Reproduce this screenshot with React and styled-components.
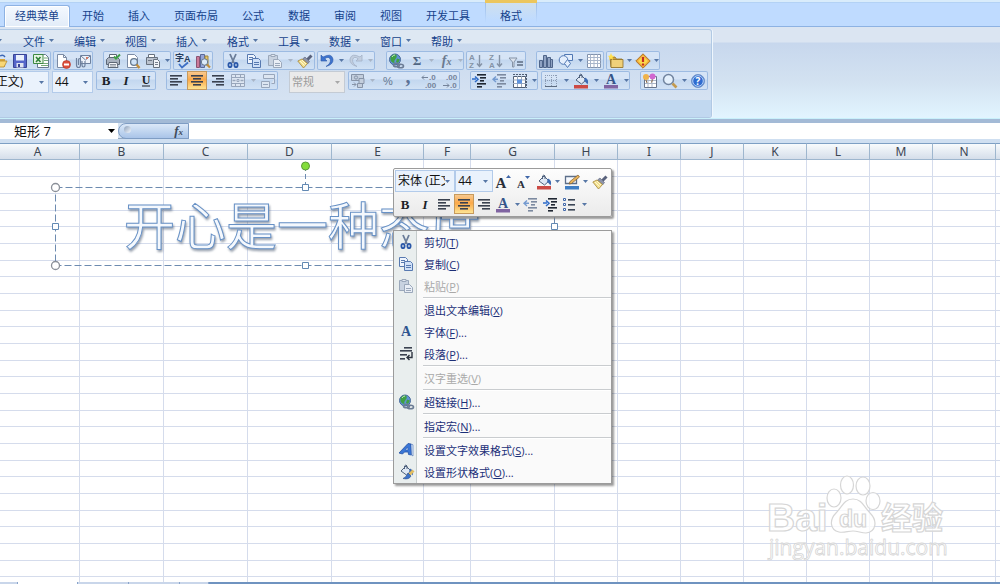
import React, {useState} from 'react'
import styled, {createGlobalStyle, css} from "styled-components";

const GlobalStyle = createGlobalStyle`
  * { box-sizing: border-box; }
  body {
    margin: 0;
    overflow: hidden;
    background: #fff;
  }
  body, button, input, select {
    font-family: "Open Sans", "Noto Sans CJK SC", sans-serif;
    font-size: 11px;
  }
  button {
    margin: 0;
    padding: 0;
    border: 0;
    background: none;
    color: inherit;
  }
  svg { display: block; flex: none; overflow: visible; }
`

/* ---------- icons ---------- */

const NAVY = "#33475f";
const GRAY = "#8593a6";

const lines = (rows, color) => rows.map(([x, y, w]) => <rect key={`${x}-${y}`} x={x} y={y} width={w} height="1.6" fill={color}/>);

const scissors = (
	<g fill="none" strokeWidth="1.8">
		<path d="M5 1l4 9M11 1L7 10" stroke="#6b7d99"/>
		<ellipse cx="5" cy="12" rx="1.6" ry="2.2" stroke="#2957a8"/>
		<ellipse cx="11" cy="12" rx="1.6" ry="2.2" stroke="#2957a8"/>
	</g>
);
const pages = (a, b) => (
	<g fill={b} stroke={a}>
		<path d="M1.5 1.5h6l2 2v7h-8z"/>
		<path d="M3 4.5h4M3 6.5h4"/>
		<path d="M6.5 5.5h6l2 2v7h-8z" fill="#cfe0f8"/>
		<path d="M8 9.5h5M8 11.5h5" />
	</g>
);
const clipboard = (
	<g stroke="#9ba8bb" fill="#c8d2e0">
		<path d="M1.5 2.5h9v10h-9z"/>
		<path d="M4 1.5h4v2H4z" fill="#e3e9f2"/>
		<path d="M6.5 6.5h5l3 3v5h-8z" fill="#e9eef6"/>
		<path d="M8 10.5h5M8 12.5h5"/>
	</g>
);
const brush = (
	<g>
		<path d="M14.5 2.5l-4 4" stroke="#59627c" strokeWidth="3"/>
		<path d="M8 4l4.500 4.500-2 2.500-5-5z" fill="#8d93a8" stroke="#596178" strokeWidth=".6"/>
		<path d="M5 6l5.500 4.500-4 4.500L.8 8z" fill="#f3e08f" stroke="#a58536" strokeWidth=".8"/>
		<path d="M3 8l4.500 4.600M5 7l4 4" stroke="#fff8d0"/>
	</g>
);
const globe = (
	<g>
		<circle cx="7" cy="6.5" r="5.5" fill="#5f93d4" stroke="#47699a"/>
		<path d="M2.500 4q3-4 6-2 1 2-1 4t-1 4q-3 0-4-3zM9 5.500l3 1-2 3.500-2-1z" fill="#3fa044"/>
		<path d="M4 4q1-2 3-2" stroke="#bfe6bd" fill="none"/>
		<g fill="none" stroke="#6b7c95" strokeWidth="1.600">
			<ellipse cx="8.500" cy="12" rx="3" ry="1.800"/>
			<ellipse cx="12.500" cy="13" rx="3" ry="1.800"/>
		</g>
	</g>
);
const bucket = (
	<g>
		<path d="M3 7l5-5 5 5-4.500 4z" fill="#dfe8f4" stroke="#50627e"/>
		<path d="M6.500 5V2q1.500-2 2.500 0v3" fill="none" stroke="#50627e"/>
		<path d="M12 4.500q4.500 2 2.500 7-1.500-2-3.500-4z" fill="#3d6bb3"/>
	</g>
);
const letter = (t, color = NAVY, size = 14, props = {}) => (
	<text x="8" y="13" textAnchor="middle" fontFamily="Liberation Serif, serif" fontSize={size} fill={color} {...props}>{t}</text>
);
const small = (t, x, y, color = GRAY, size = 8) => (
	<text x={x} y={y} fontFamily="Liberation Sans, sans-serif" fontWeight="bold" fontSize={size} fill={color}>{t}</text>
);

const ICONS = {
	open: <g><path d="M1 4h5l1 2h7v8H1z" fill="#d9a63b"/><path d="M4 8h12l-3 6H1z" fill="#f8d777" stroke="#b68a2c" strokeWidth=".8"/><path d="M9 3q3-2 5 1" fill="none" stroke="#3c67b5" strokeWidth="1.4"/></g>,
	save: <g><path d="M1.500 1.500h13v13h-13z" fill="#5566c9" stroke="#384495"/><path d="M4 2h8v5.500H4z" fill="#eaf0fc"/><path d="M4.500 10h7v4.500h-7z" fill="#dfe4f0"/><path d="M6 11h2v3H6z" fill="#384495"/></g>,
	excel: <g><path d="M4.500 1.500h8l3 3v10h-11z" fill="#fff" stroke="#66798f"/><path d="M11 5h4M11 7.500h4M8 10.500h7M8 12.500h7" stroke="#75a878"/><path d="M.5 1.500h9.500v9H.5z" fill="#e7f4e4" stroke="#3e8a42"/><path d="M3 4l4.500 5M7.500 4L3 9" stroke="#2e8237" strokeWidth="1.600"/></g>,
	deny: <g><path d="M2.500 1.500h6l3 3v10h-9z" fill="#fff" stroke="#7b8ba5"/><path d="M8.500 1.500v3h3" fill="none" stroke="#7b8ba5"/><circle cx="11.500" cy="11.500" r="4" fill="#dc4f3c" stroke="#b43324" strokeWidth=".6"/><path d="M9 11.500h5" stroke="#fff" strokeWidth="1.800"/></g>,
	mail: <g fill="#edf2fa" stroke="#6e819e"><path d="M5.500 2.500h10v8h-10z"/><path d="M6 3l4.500 4L15 3" fill="none"/><rect x="11" y="4" width="2" height="2" fill="#d57b65" stroke="none"/><path d="M1.500 5v7q0 2.500 2 2.500t2-2.500V7q0-1.500-1-1.500T3.500 7v5M7 8v4q0 2 1.500 2t1.500-2V8" fill="none" strokeWidth="1.200"/></g>,
	print: <g stroke="#5d6775"><path d="M4.500 1.500h7v5h-7z" fill="#fff"/><path d="M1.500 6.500l2-2h9l2 2v5h-13z" fill="#a9b2bf"/><path d="M4 9.500h8l1 5H3z" fill="#f4f6f9"/><path d="M5 11.500h6M5 13h6" strokeWidth=".7"/><path d="M9 3.500l2 2 4-4" fill="none" stroke="#3fa047" strokeWidth="2"/></g>,
	preview: <g><path d="M2.500 1.500h7l3 3v10h-10z" fill="#fff" stroke="#7b8ba5"/><circle cx="9" cy="9" r="3.400" fill="#cfe3f8" stroke="#66798f" strokeWidth="1.300"/><path d="M11.500 11.500l3 3.500" stroke="#c18e3d" strokeWidth="2.400"/></g>,
	printArea: <g stroke="#67717f"><path d="M3.500 1.500h6v3h-6z" fill="#fff"/><path d="M1.500 4.500h11v7h-11z" fill="#bac2ce"/><path d="M8.500 6.500h4l2 2v6h-6z" fill="#f1f4f9"/><path d="M10 9.500h3M10 11.500h3M3 7.500h4" strokeWidth=".9"/></g>,
	spell: <g><text x="0" y="8" fontSize="9" fontWeight="bold" fill="#263c5c">字</text>{small("A", 9, 9, "#263c5c", 9)}<path d="M4 11l3 3.500 6-5" fill="none" stroke="#3d6fc4" strokeWidth="1.800"/></g>,
	research: <g><path d="M1.500 3.500h3v11h-3z" fill="#cb7a9a" stroke="#8b5473"/><path d="M5.500 1.500h4v13h-4z" fill="#95a4d8" stroke="#5a6a99"/><path d="M10 3l3 0v9h-3z" fill="#e8c667" stroke="#9b8340"/><circle cx="9.500" cy="9" r="3.200" fill="#dbeafa" stroke="#66798f"/><path d="M12 11.500l3 3" stroke="#c18e3d" strokeWidth="2.200"/></g>,
	cut: scissors,
	copy: pages("#5779b0", "#eef4fd"),
	paste: clipboard,
	brush,
	undo: <path d="M2 2v6h6L5.800 5.800q4-3 5.500.5 1 4-4.300 7.200 7.500-2 7-7.500Q12.500-.5 4 4z" fill="#3e74cf" stroke="#2c57a6" strokeWidth=".6"/>,
	redo: <path d="M14 2v6H8l2.200-2.200q-4-3-5.500.5-1 4 4.300 7.200Q1.500 11.500 2 6 3.500-.5 12 4z" fill="#c3cfe0" stroke="#a3b1c6" strokeWidth=".8"/>,
	link: globe,
	sum: letter("Σ", "#4f6683", 13, {y: 12, fontWeight: "bold"}),
	fx: <g>{letter("f", "#6a7a8f", 14, {x: 6, y: 12, fontStyle: "italic", fontWeight: "bold"})}{letter("x", "#6a7a8f", 10, {x: 11, y: 12, fontStyle: "italic", fontWeight: "bold"})}</g>,
	az: <g>{small("A", 1, 7)}{small("Z", 1, 15)}<path d="M11.500 2v11M9 10.500l2.500 3 2.500-3" fill="none" stroke={GRAY} strokeWidth="1.400"/></g>,
	za: <g>{small("Z", 1, 7)}{small("A", 1, 15)}<path d="M11.500 2v11M9 10.500l2.500 3 2.500-3" fill="none" stroke={GRAY} strokeWidth="1.400"/></g>,
	filter: <g><path d="M1 5h8L6 9v5H4.500V9z" fill="#dbe3ee" stroke={GRAY}/><path d="M9 9h6M9 12h6" stroke="#5d6c81" strokeWidth="1.500"/></g>,
	chart: <g fill="#8fa2c2" stroke="#4f658a"><path d="M1.500 7.500h3v7h-3zM5.500 2.500h3v12h-3zM9.500 4.500h3v10h-3z"/><path d="M12.500 6.500h2v8h-2z"/></g>,
	shapes: <g fill="#e4eefc" stroke="#5178b4"><path d="M6.500 1.500h8v6h-8z"/><circle cx="5.500" cy="7" r="4.300"/><path d="M9.500 6.500l3 4-3 4-3-4z"/></g>,
	table: <g><path d="M1.500 1.500h13v13h-13z" fill="#fff" stroke="#8192ad"/><path d="M1.500 4.500h13M1.500 7.500h13M1.500 10.500h13M4.500 1.500v13M8 1.500v13M11.500 1.500v13" stroke="#a9b6cb" fill="none"/></g>,
	folder: <g><path d="M2 4h5l1.500 2H14v8H3z" fill="#d5a63a" stroke="#8f7026" strokeWidth=".8"/><path d="M3 6.500h12v8H3z" fill="#efd07a" stroke="#8f7026" strokeWidth=".8"/><path d="M3 0l1 2.500 2.500.5-2 1.500L5 7 3 5.500 1 7l.5-2.500L0 3l2-.5z" fill="#ffe04e"/></g>,
	warn: <g><path d="M8 .8L15.200 8 8 15.200.8 8z" fill="#f0a83a" stroke="#b07726"/><path d="M8 3l5 5-5 5-5-5z" fill="#fbd94c"/><path d="M8 4v5M8 10.500v2" stroke="#c42d24" strokeWidth="2.200"/></g>,
	bold: letter("B", "#1b1f27", 13, {y: 12, fontWeight: "bold"}),
	italic: letter("I", "#1b1f27", 13, {y: 12, fontStyle: "italic", fontWeight: "bold"}),
	underline: <g>{letter("U", "#1b1f27", 12, {y: 11, fontWeight: "bold"})}<path d="M4 13h8" stroke="#1b1f27" strokeWidth="1.200"/></g>,
	left: lines([[2, 2, 12], [2, 5, 8], [2, 8, 12], [2, 11, 8]], "#3a4250"),
	center: lines([[2, 2, 12], [4, 5, 8], [2, 8, 12], [4, 11, 8]], "#3a4250"),
	right: lines([[2, 2, 12], [6, 5, 8], [2, 8, 12], [6, 11, 8]], "#3a4250"),
	merge: <g fill="#dde6f2" stroke="#98a6bb"><path d="M1.500 1.500h13v12h-13z"/><path d="M1.500 4.500h13M1.500 10.500h13M5.500 1.500v3M10.500 1.500v3M5.500 10.500v3M10.500 10.500v3"/><path d="M2.500 7.500h3M10.500 7.500h3" strokeWidth="1.400"/><path d="M7 6.500h2v2H7z"/></g>,
	wrap: <g fill="#dde6f2" stroke="#98a6bb"><path d="M3.500 1.500h11v4h-11zM1.500 8.500h8v6h-8z"/><path d="M14.500 5.500v5h-3M3 11.500h5"/></g>,
	currency: <g fill="#c3cedd" stroke="#8794a8"><path d="M1.500 1.500h12v6h-12z"/><circle cx="6" cy="4.500" r="1.600"/><path d="M9 5.500h5v5H9zM7.500 10.500h5v4h-5z"/><path d="M2 11.500h4M4 9.500l2 2-2 2" fill="none"/></g>,
	percent: <text x="8" y="12" textAnchor="middle" fontFamily="Liberation Sans, sans-serif" fontSize="11" fill="#65768e">%</text>,
	comma: letter(",", "#5b7297", 20, {y: 10, fontWeight: "bold"}),
	decInc: <g>{small(".0", 8, 7, "#74839a", 8)}{small(".00", 4, 15, "#74839a", 8)}<path d="M7 4.500H1M3 2.500l-2 2 2 2" fill="none" stroke="#74839a"/></g>,
	decDec: <g>{small(".00", 4, 7, "#74839a", 8)}{small(".0", 8, 15, "#74839a", 8)}<path d="M1 12.500h6M5 10.500l2 2-2 2" fill="none" stroke="#74839a"/></g>,
	indent: <g>{lines([[5, 1, 9], [8, 4, 6], [8, 7, 4], [5, 10, 9], [5, 13, 5]], "#1f2632")}<path d="M0 6h4M3 3.500L6 6.300 3 9" fill="none" stroke="#2d6bc9" strokeWidth="1.500"/></g>,
	outdent: <g>{lines([[5, 1, 9], [8, 4, 6], [8, 7, 4], [5, 10, 9], [5, 13, 5]], "#7c8aa0")}<path d="M1 6.300h5M4 3.500L1 6.300 4 9" fill="none" stroke="#759bd0" strokeWidth="1.400"/></g>,
	range: <g><path d="M1.500 3.500h12v11h-12z" fill="#fff" stroke="#4f5d73"/><path d="M1 1.500h14" stroke="#4f5d73" strokeDasharray="2 1"/><path d="M5.500 3v11M9.500 3v11M1 7h13M1 10.500h13" stroke="#9aa7ba"/><path d="M5 6.500h5v4H5z" fill="#5f93dd"/><path d="M14.500 2v13" stroke="#4f5d73" strokeDasharray="2 1"/></g>,
	border: <g fill="none" stroke="#8b9bb3"><path d="M2.500 2v11M8.500 2v11M13.500 2v11M2 2.500h12M2 7.500h12" strokeDasharray="1 1"/><path d="M2 13.500h12" stroke="#5c6b80"/></g>,
	fill: <g>{bucket}<rect x="1" y="12" width="14" height="3.500" fill="#cc4a45"/></g>,
	fontColor: <g>{letter("A", "#36558a", 14, {y: 11, fontWeight: "bold"})}<rect x="1" y="12" width="14" height="3.500" fill="#8064a2"/></g>,
	calendar: <g><path d="M2.500 3.500h12v11h-12z" fill="#fff" stroke="#68758c"/><path d="M3 7.500h11M3 10.500h11M6 5v9M10 5v9" stroke="#aab5c7"/><circle cx="4" cy="4" r="3" fill="#efb34b"/><circle cx="10.500" cy="3.500" r="3" fill="#d167cf"/><path d="M4 7l1 3M10.500 6.500l-1 3" stroke="#8b6a44"/></g>,
	search: <g><circle cx="6.500" cy="6.500" r="5" fill="#e4f0fc" stroke="#71849f" strokeWidth="1.500"/><path d="M10.500 10.500l4 4" stroke="#c39a4e" strokeWidth="2.600"/></g>,
	help: <g><circle cx="8" cy="8" r="6.500" fill="#2f6cd0" stroke="#7395c8"/><circle cx="8" cy="8" r="5.300" fill="none" stroke="#bfd7f7"/><text x="8" y="12" textAnchor="middle" fontSize="10" fontWeight="bold" fill="#fff">?</text></g>,
	grow: <g>{letter("A", "#2a2f3a", 15, {x: 6, y: 14, fontWeight: "bold"})}<path d="M11 4l2.500-3L16 4z" fill="#3f66a8"/></g>,
	shrink: <g>{letter("A", "#2a2f3a", 11, {x: 6, y: 14, fontWeight: "bold"})}<path d="M10 2l2.500 3L15 2z" fill="#3f66a8"/></g>,
	outline: <g><path d="M1.500 2.500h11v7h-11z" fill="#f7fafe" stroke="#5d6f8a" strokeWidth="1.300"/><path d="M14 1L6 7.500l-1 2.500 2.500-.5L15.500 3z" fill="#e9b45c" stroke="#7c5a2a" strokeWidth=".7"/><rect x="1" y="12" width="14" height="3.500" fill="#3f7ec4"/></g>,
	list: <g>{lines([[6, 2, 7], [6, 7, 7], [6, 12, 7]], "#3b4656")}<path d="M1.500 1.500h2v2h-2zM1.500 6.500h2v2h-2zM1.500 11.500h2v2h-2z" fill="#fff" stroke="#3f66a8"/></g>,
	font: letter("A", "#2f5590", 14, {y: 12, fontWeight: "bold"}),
	paragraph: <g>{lines([[6, 1, 8], [2, 4, 12], [2, 8, 7], [2, 12, 5]], "#3a4250")}<path d="M14 6v5.500H9M11.500 9L9 11.500l2.500 2.500" fill="none" stroke="#2c333f" strokeWidth="1.400"/></g>,
	textEffect: <g><path d="M10 1.500l3 .5.500 11-3-.5-.3-2.500H6.500L4.500 12 1 11z" fill="#3a76d6" stroke="#2350a4" strokeWidth=".8"/><path d="M13 2l2 .8V14l-1.500-1zM9.500 5l.5 3H7.500z" fill="#e2edfc" stroke="#2350a4" strokeWidth=".5"/></g>,
	shapeFormat: <g>{bucket}<path d="M15.500 6.500L11 11" stroke="#e2bd60" strokeWidth="2.800"/><path d="M10 9l3 3q-2 4-8 2.500 3-1 5-5.500z" fill="#3d72c9" stroke="#2a4d8c" strokeWidth=".6"/></g>,
};

const Icon = ({name}) => <svg width="16" height="16" viewBox="0 0 16 16" aria-hidden="true">{ICONS[name]}</svg>;

const Caret = ({color = "#5777a6"}) => (
	<svg width="5" height="3" viewBox="0 0 5 3" aria-hidden="true"><path d="M0 0h5L2.500 3z" fill={color}/></svg>
);

/* ---------- data ---------- */

const TABS = ["经典菜单", "开始", "插入", "页面布局", "公式", "数据", "审阅", "视图", "开发工具"];
const MENUS = ["文件", "编辑", "视图", "插入", "格式", "工具", "数据", "窗口", "帮助"];

// "v" is a drop-down arrow beside the icon before it
const ROW_ONE = [
	{w: 62, gap: -11, items: ["open", "save", "excel"]},
	{w: 40, gap: 2, items: ["deny", "mail"]},
	{w: 68, gap: 10, items: ["print", "preview", "printArea", "v"]},
	{w: 40, gap: 2, items: ["spell", "research"]},
	{w: 92, gap: 10, items: ["cut", "copy", "paste", "v-", "brush"]},
	{w: 58, gap: 2, items: ["undo", "v", "redo", "v-"]},
	{w: 78, gap: 11, items: ["link", "sum", "v-", "fx", "v-"]},
	{w: 60, gap: 2, items: ["az", "za", "filter"]},
	{w: 68, gap: 10, items: ["chart", "shapes", "v", "table"]},
	{w: 54, gap: 2, items: ["folder", "v", "warn", "v"]},
];

const COLUMNS = [["A", 80], ["B", 84], ["C", 84], ["D", 84], ["E", 92], ["F", 47], ["G", 84], ["H", 63], ["I", 63], ["J", 63], ["K", 63], ["L", 63], ["M", 63], ["N", 63], ["", null]];
const ROWS = Array.from({length: 26}, (_, i) => i);

const CONTEXT = [
	{icon: "cut", text: "剪切", hot: "T"},
	{icon: "copy", text: "复制", hot: "C"},
	{icon: "paste", text: "粘贴", hot: "P", off: true},
	{line: true},
	{text: "退出文本编辑", hot: "X"},
	{icon: "font", text: "字体", hot: "F", more: true},
	{icon: "paragraph", text: "段落", hot: "P", more: true},
	{line: true},
	{text: "汉字重选", hot: "V", off: true},
	{line: true},
	{icon: "link", text: "超链接", hot: "H", more: true},
	{line: true},
	{text: "指定宏", hot: "N", more: true},
	{line: true},
	{icon: "textEffect", text: "设置文字效果格式", hot: "S", more: true},
	{icon: "shapeFormat", text: "设置形状格式", hot: "O", more: true},
];

/* ---------- parts ---------- */

const Tools = ({items}) => items.map((name, i) => (
	name[0] === "v"
		? <ArrowButton key={i} aria-label="更多"><Caret color={name === "v-" ? "#a9b5c6" : undefined}/></ArrowButton>
		: <ToolButton key={i} aria-label={name} $on={name === "center"}><Icon name={name}/></ToolButton>
));

const DropDown = ({label, value, w, gap, off}) => (
	<DropDownBox $w={w} $gap={gap} $off={off}>
		<select aria-label={label} defaultValue={value} disabled={off}>
			<option>{value}</option>
		</select>
		<Caret color={off ? "#a8a8a8" : undefined}/>
	</DropDownBox>
);

const Ribbon = () => (
	<RibbonArea>
		<RibbonGroup>
			<MenuBar>
				<MenuButton $cut aria-label="菜单"><Caret/></MenuButton>
				{MENUS.map((m) => <MenuButton key={m}>{m}<Caret/></MenuButton>)}
			</MenuBar>
			<ToolRow>
				{ROW_ONE.map((g, i) => <ToolGroup key={i} $w={g.w} $gap={g.gap}><Tools items={g.items}/></ToolGroup>)}
			</ToolRow>
			<ToolRow>
				<DropDown label="字体" value="宋体 (正文)" w={87} gap={-38}/>
				<DropDown label="字号" value="44" w={41} gap={3}/>
				<ToolGroup $w={60} $gap={3}><Tools items={["bold", "italic", "underline"]}/></ToolGroup>
				<ToolGroup $w={112} $gap={10}><Tools items={["left", "center", "right", "merge", "v-", "wrap"]}/></ToolGroup>
				<DropDown label="数字格式" value="常规" w={56} gap={11} off/>
				<ToolGroup $w={112} $gap={3}><Tools items={["currency", "v-", "percent", "comma", "decInc", "decDec"]}/></ToolGroup>
				<ToolGroup $w={68} $gap={10}><Tools items={["indent", "outdent", "range", "v"]}/></ToolGroup>
				<ToolGroup $w={89} $gap={3}><Tools items={["border", "v", "fill", "v", "fontColor", "v"]}/></ToolGroup>
				<ToolGroup $w={68} $gap={10}><Tools items={["calendar", "search", "v", "help"]}/></ToolGroup>
			</ToolRow>
			<GroupLabel/>
		</RibbonGroup>
	</RibbonArea>
);

const TextShape = () => (
	<ShapeBox>
		<svg width="500" height="79" aria-hidden="true">
			<g fill="none" stroke="#6d8bb0">
				<path d="M.5 .5h499v78H.5z" strokeDasharray="7 3"/>
				<path d="M250.500 0v-18" strokeDasharray="5 3"/>
			</g>
			<circle cx="250.500" cy="-21" r="4" fill="#84dd3a" stroke="#5c9a38"/>
			<g fill="#fff" stroke="#8a8f98" strokeWidth="1.300">
				<circle cx=".5" cy=".5" r="4"/>
				<circle cx=".5" cy="78.500" r="4"/>
			</g>
			<g fill="#fff" stroke="#6289b3">
				<path d="M247.500-2.500h6v6h-6zM247.500 75.500h6v6h-6zM-2.500 36.500h6v6h-6zM496.500 36.500h6v6h-6z"/>
			</g>
		</svg>
		<ShapeText>开心是一种态度</ShapeText>
	</ShapeBox>
);

const ContextMenu = () => (
	<MenuPopup role="menu">
		{CONTEXT.map((c, i) => c.line
			? <MenuLine key={i} role="separator"/>
			: (
				<MenuItem key={i} role="menuitem" disabled={c.off}>
					<IconSlot>{c.icon && <Icon name={c.icon}/>}</IconSlot>
					<span>{c.text}(<u>{c.hot}</u>){c.more && "..."}</span>
				</MenuItem>
			))}
	</MenuPopup>
);

const Watermark = () => (
	<WatermarkBox>
		<svg width="180" height="88" viewBox="0 0 180 88">
			<g fill="#fff" fillOpacity=".8" stroke="#d6d6d6" strokeWidth="1.200">
				<ellipse cx="67" cy="23" rx="7" ry="9"/>
				<ellipse cx="80" cy="10" rx="6.500" ry="9"/>
				<ellipse cx="96" cy="11" rx="7" ry="9"/>
				<ellipse cx="106" cy="26" rx="7" ry="8.500"/>
				<path d="M86 24c9 0 11 8 17 14 8 8 6 19-4 20-5 0-8-2-13-2s-9 2-14 1c-9-2-10-12-3-19 6-6 8-14 17-14z"/>
				<g fontFamily="Liberation Sans, sans-serif" fontWeight="bold">
					<text x="0" y="56" fontSize="39">Bai</text>
					<text x="72" y="52" fontSize="23">du</text>
				</g>
				<text x="114" y="54" fontSize="31" fontWeight="bold" fontFamily="Noto Sans CJK SC, sans-serif">经验</text>
				<text x="2" y="80" fontSize="21" fontFamily="Open Sans, sans-serif" strokeWidth=".8">jingyan.baidu.com</text>
			</g>
		</svg>
	</WatermarkBox>
);

export default function App() {
	const [name, setName] = useState("矩形 7");
	const [formula, setFormula] = useState("");

	return (
		<Window>
			<GlobalStyle/>
			<TabBar role="tablist">
				{TABS.map((t, i) => <Tab key={t} role="tab" aria-selected={i === 0} $active={i === 0}>{t}</Tab>)}
				<ContextTab role="tab">格式</ContextTab>
			</TabBar>
			<Ribbon/>
			<FormulaBar>
				<NameInput aria-label="名称框" value={name} onChange={(e) => setName(e.target.value)}/>
				<NameArrow aria-label="名称列表">
					<svg width="7" height="4" viewBox="0 0 7 4"><path d="M0 0h7L3.500 4z" fill="#000"/></svg>
				</NameArrow>
				<FxArea>
					<Knob/>
					<FxButton aria-label="插入函数">f<sub>x</sub></FxButton>
				</FxArea>
				<FormulaInput aria-label="编辑栏" value={formula} onChange={(e) => setFormula(e.target.value)}/>
			</FormulaBar>
			<Sheet>
				<Grid>
					<colgroup>{COLUMNS.map(([c, w]) => <Col key={c} $w={w}/>)}</colgroup>
					<thead>
						<tr>{COLUMNS.map(([c]) => <th key={c}>{c}</th>)}</tr>
					</thead>
					<tbody>
						{ROWS.map((r) => <tr key={r}>{COLUMNS.map(([c]) => <td key={c}/>)}</tr>)}
					</tbody>
				</Grid>
				<Watermark/>
				<TextShape/>
				<MiniBar>
					<MiniRow>
						<DropDown label="字体" value="宋体 (正文)" w={60} gap={0}/>
						<DropDown label="字号" value="44" w={38} gap={0}/>
						<Tools items={["grow", "shrink", "fill", "v", "outline", "v", "brush"]}/>
					</MiniRow>
					<MiniRow>
						<Tools items={["bold", "italic", "left", "center", "right", "fontColor", "v", "outdent", "indent", "list", "v"]}/>
						<MiniSpace/>
					</MiniRow>
				</MiniBar>
				<ContextMenu/>
			</Sheet>
			<SheetTabs>
				<SheetTab $w={18}/>
				<SheetTab $w={60} $active/>
				<SheetTab $w={51}/>
				<SheetTab $w={51}/>
				<SheetTab $w={29}/>
			</SheetTabs>
		</Window>
	)
}

/* ---------- styles ---------- */

const Window = styled.div`
  display: flex;
  flex-direction: column;
  height: 100vh;
  overflow: hidden;
`

const TabBar = styled.div`
  display: flex;
  flex: none;
  height: 27px;
  padding-left: 4px;
  color: #15428b;
  background: linear-gradient(#d9ecfb 0 2px, #b3d2f5 2px 3px, #bfdbff 3px);
  border-bottom: 1px solid #8db2e3;
`

const Tab = styled.button`
  padding: 3px 12px 0;
  white-space: nowrap;
  ${(p) => p.$active && css`
    margin: 5px 0 -1px;
    padding: 0 10px 4px;
    border: 1px solid #8db2e3;
    border-bottom: 0;
    border-radius: 3px 3px 0 0;
    background: linear-gradient(#f4f9ff, #e2ecf8);
    box-shadow: inset 0 0 0 1px #fff;
  `}
`

const ContextTab = styled(Tab)`
  margin-left: 3px;
  padding: 3px 15px 0;
  background:
    linear-gradient(#9dbde8, #bfdbff) 0 3px / 1px 20px no-repeat,
    linear-gradient(#9dbde8, #bfdbff) 100% 3px / 1px 20px no-repeat,
    linear-gradient(#ecc65c 0 3px, #cfe0ee 3px, #bfdbff 20px);
`

const RibbonArea = styled.div`
  display: flex;
  flex: none;
  padding: 2px 0 1px;
  background: linear-gradient(#dbe5f2 0 15px, #c7d7ed 16px, #d3e2f1 60%, #e2f5ff);
  border-bottom: 4px solid #a3bad6;
  box-shadow: inset 0 -1px #c9f0fb;
`

const RibbonGroup = styled.div`
  display: flex;
  flex-direction: column;
  gap: 1px;
  padding: 1px 3px 0 0;
  overflow: hidden;
  border: 1px solid #b1c9e4;
  border-left: 0;
  border-radius: 0 3px 3px 0;
  box-shadow: 1px 0 #eef6fd;
  background: linear-gradient(#dee8f3 0 13px, #c9d9ee 14px, #d9e5f3);
`

const MenuBar = styled.div`
  display: flex;
  height: 19px;
  color: #15428b;
`

const MenuButton = styled.button`
  display: flex;
  align-items: center;
  gap: 4px;
  width: 51px;
  padding-left: 8px;
  white-space: nowrap;
  ${(p) => p.$cut && css`
    width: 15px;
    padding: 0;
    svg { margin-left: -3px; }
  `}
`

const ToolRow = styled.div`
  display: flex;
  align-items: flex-start;
`

const ToolGroup = styled.div`
  display: flex;
  justify-content: space-between;
  flex: none;
  width: ${(p) => p.$w}px;
  height: 19px;
  margin-left: ${(p) => p.$gap}px;
  border-radius: 2px;
  background: linear-gradient(#d6e4f6 0 8px, #c3d7ef 9px, #d3e3f5);
  box-shadow: inset 0 0 0 1px #9dbbe2;
`

const ToolButton = styled.button`
  display: flex;
  align-items: center;
  justify-content: center;
  flex: 0 1 20px;
  min-width: 0;
  padding-top: 1px;
  ${(p) => p.$on && css`
    background: linear-gradient(#f8cd98, #fba94a 45%, #fde99a);
    box-shadow: inset 0 0 0 1px #c79a5c;
  `}
`

const ArrowButton = styled.button`
  display: flex;
  align-items: center;
  justify-content: center;
  flex: 0 0 8px;
`

const DropDownBox = styled.label`
  display: flex;
  align-items: center;
  flex: none;
  width: ${(p) => p.$w}px;
  height: 22px;
  margin-left: ${(p) => p.$gap}px;
  padding-right: 4px;
  border: 1px solid ${(p) => p.$off ? "#c4cbd4" : "#b3cbea"};
  background: ${(p) => p.$off ? "#eaeaea" : "#eaf2fc"};
  select {
    appearance: none;
    flex: 1;
    min-width: 0;
    height: 20px;
    padding: 0 0 2px 2px;
    border: 0;
    outline: 0;
    overflow: hidden;
    text-overflow: clip;
    background: none;
    font-size: ${(p) => p.$off ? 11 : 12}px;
    color: ${(p) => p.$off ? "#9a9a9a" : "#111"};
    opacity: 1;
  }
`

const GroupLabel = styled.div`
  height: 17px;
  margin: 6px -3px 0 0;
  background: #c1d8f0;
`

const FormulaBar = styled.div`
  display: flex;
  flex: none;
  height: 20px;
  background: #d5e3f3;
  border-bottom: 4px solid #cfdff1;
  box-shadow: inset 0 -1px #93a9c4;
`

const NameInput = styled.input`
  width: 104px;
  padding: 0 0 2px 14px;
  border: 0;
  outline: 0;
  background: #fff;
  font-size: 13px;
  color: #111;
`

const NameArrow = styled.button`
  display: flex;
  align-items: center;
  justify-content: center;
  width: 14px;
  background: #fff;
`

const FxArea = styled.div`
  display: flex;
  align-items: center;
  justify-content: space-between;
  width: 71px;
  padding: 0 5px;
  border: 1px solid #7f9dc4;
  border-radius: 9px 0 0 9px;
  background: linear-gradient(#dbe8f8, #a9c4e8);
`

const Knob = styled.span`
  width: 7px;
  height: 7px;
  margin-bottom: 3px;
  border-radius: 50%;
  background: linear-gradient(135deg, #8ca0bb, #f4f8fd);
`

const FxButton = styled.button`
  font: italic bold 13px/14px "Liberation Serif", serif;
  color: #414b5a;
  sub {
    font-size: 9px;
    vertical-align: baseline;
  }
`

const FormulaInput = styled.input`
  flex: 1;
  border: 0;
  outline: 0;
  background: #fff;
`

const Sheet = styled.main`
  position: relative;
  flex: 1;
  min-height: 0;
  overflow: hidden;
`

const Grid = styled.table`
  width: 100%;
  table-layout: fixed;
  border-collapse: separate;
  border-spacing: 0;
  th {
    height: 17px;
    padding: 0;
    border: solid #9eb6ce;
    border-width: 1px 1px 1px 0;
    border-top-color: #7d9fc4;
    background: linear-gradient(#f8fbfd, #d5deea);
    font: 12px/15px "Noto Sans", sans-serif;
    color: #3c4653;
  }
  td {
    height: 17px;
    padding: 0;
    border: solid #d5dcec;
    border-width: 0 1px 1px 0;
  }
  th:first-child { padding-right: 4px; }
  th:last-child, td:last-child { border-right: 0; }
  tr:nth-child(3n + 4) td { height: 16px; }
`

const Col = styled.col`
  width: ${(p) => p.$w ? `${p.$w}px` : "auto"};
`

const ShapeBox = styled.div`
  position: absolute;
  top: 44px;
  left: 55px;
`

const ShapeText = styled.div`
  position: absolute;
  top: 0;
  left: 69px;
  font: 51px/72px "Noto Sans CJK SC", sans-serif;
  white-space: nowrap;
  color: #f4f8fd;
  -webkit-text-stroke: 1px #6791c6;
  filter: drop-shadow(1px 2px 1px rgba(70, 85, 110, .55));
`

const popup = css`
  position: absolute;
  left: 393px;
  width: 219px;
  border: 1px solid #9b9b9b;
  background: #fafafa;
  box-shadow: 2px 2px 2px rgba(0, 0, 0, .4);
`

const MiniBar = styled.div`
  ${popup}
  top: 25px;
  height: 49px;
  padding: 1px;
  border-radius: 2px;
  background: linear-gradient(#fdfdfd, #ebebeb);
`

const MiniRow = styled.div`
  display: flex;
  justify-content: space-between;
  height: 22px;
  & + & {
    height: 20px;
    margin-top: 2px;
  }
`

const MiniSpace = styled.span`
  width: 22px;
`

const MenuPopup = styled.div`
  ${popup}
  top: 87px;
  background: linear-gradient(90deg, #e9eeee 0 22px, #c5cccc 22px 23px, #fafafa 23px);
`

const MenuItem = styled.button`
  display: flex;
  align-items: center;
  width: 100%;
  height: 22px;
  color: #1b2f78;
  &:disabled { color: #a9a9a9; }
`

const IconSlot = styled.span`
  width: 26px;
  margin-left: 4px;
`

const MenuLine = styled.div`
  height: 2px;
  margin-left: 29px;
  background: linear-gradient(#c9cccf 0 1px, #fff 1px);
`

const WatermarkBox = styled.div`
  position: absolute;
  right: 53px;
  bottom: 19px;
`

const SheetTabs = styled.div`
  display: flex;
  flex: none;
  height: 2px;
  background: #6f93c0;
`

const SheetTab = styled.div`
  width: ${(p) => p.$w}px;
  border-right: 1px solid #8aa5cb;
  background: ${(p) => p.$active ? "#fff" : "#c9d6ea"};
`
